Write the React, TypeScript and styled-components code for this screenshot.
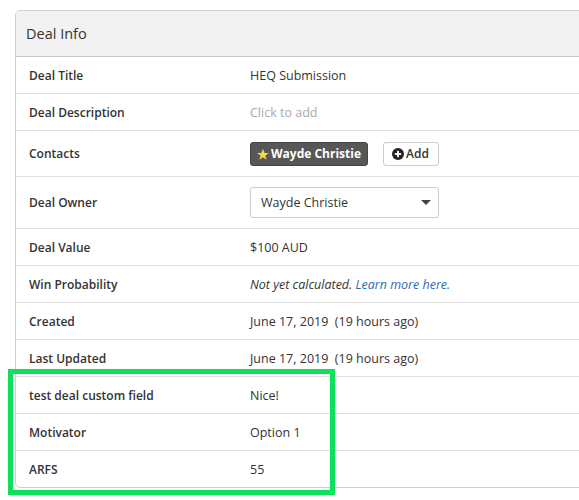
import React from 'react';
import styled, { createGlobalStyle } from 'styled-components';

const GlobalStyle = createGlobalStyle`
  html, body {
    margin: 0;
    padding: 0;
    background: #fff;
    font-family: 'Open Sans', 'Liberation Sans', sans-serif;
    color: #333;
  }
`;

const Page = styled.div`
  position: relative;
  width: 579px;
  height: 500px;
  overflow: hidden;
  padding: 10px 0 0 15px;
  box-sizing: border-box;
`;

const Panel = styled.div`
  width: 600px;
  border: 1px solid #cfcfcf;
  border-radius: 5px;
  overflow: hidden;
  background: #fff;
`;

const Header = styled.div`
  height: 45px;
  background: #f2f2f2;
  border-bottom: 1px solid #c8c8c8;
  display: flex;
  align-items: center;
  padding-left: 10px;
  font-size: 14.5px;
  color: #333;
`;

const Row = styled.div<{ $h?: number; $last?: boolean }>`
  display: grid;
  grid-template-columns: 221px 1fr;
  align-items: center;
  height: ${(p) => p.$h ?? 36}px;
  border-bottom: ${(p) => (p.$last ? 'none' : '1px solid #dedede')};
  padding-left: 13px;
`;

const Label = styled.div`
  font-size: 12px;
  font-weight: 600;
  color: #333;
`;

const Value = styled.div<{ $muted?: boolean; $italic?: boolean }>`
  font-size: 12.5px;
  color: ${(p) => (p.$muted ? '#aaa' : '#333')};
  font-style: ${(p) => (p.$italic ? 'italic' : 'normal')};
  display: flex;
  align-items: center;
  white-space: pre;
`;

const LinkText = styled.span`
  color: #2b6cb0;
`;

const ContactTag = styled.span`
  display: inline-flex;
  align-items: center;
  gap: 2px;
  height: 24px;
  padding: 0 6px;
  box-sizing: border-box;
  background: #575757;
  border: 1px solid #444;
  border-radius: 3px;
  color: #fff;
  font-weight: 700;
  font-size: 12px;
`;

const Star = styled.span`
  color: #f4dc4a;
  font-size: 13px;
`;

const AddButton = styled.button`
  display: inline-flex;
  align-items: center;
  gap: 2px;
  height: 24px;
  margin-left: 15px;
  padding: 0 9px 0 8px;
  background: #fff;
  border: 1px solid #ccc;
  border-radius: 3px;
  font-family: inherit;
  font-size: 12px;
  font-weight: 600;
  color: #333;
`;

const Select = styled.div`
  width: 189px;
  height: 31px;
  box-sizing: border-box;
  border: 1px solid #ccc;
  border-radius: 3px;
  display: flex;
  align-items: center;
  justify-content: space-between;
  padding: 0 7px 0 10px;
  font-size: 12.5px;
  color: #333;
`;

const Caret = styled.span`
  width: 0;
  height: 0;
  border-left: 5px solid transparent;
  border-right: 5px solid transparent;
  border-top: 5px solid #444;
`;

const Highlight = styled.div`
  position: absolute;
  left: 8px;
  top: 369px;
  width: 327px;
  height: 126px;
  box-sizing: border-box;
  border: 5px solid #0fe05c;
  pointer-events: none;
`;

const PlusIcon = () => (
  <svg width="12" height="12" viewBox="0 0 12 12">
    <circle cx="6" cy="6" r="6" fill="#222" />
    <rect x="2.8" y="5.1" width="6.4" height="1.8" fill="#fff" />
    <rect x="5.1" y="2.8" width="1.8" height="6.4" fill="#fff" />
  </svg>
);

const rows: { label: string; value: React.ReactNode; muted?: boolean; italic?: boolean }[] = [
  { label: 'Deal Value', value: '$100 AUD' },
  {
    label: 'Win Probability',
    value: (
      <>
        Not yet calculated. <LinkText>Learn more here.</LinkText>
      </>
    ),
    italic: true,
  },
  { label: 'Created', value: 'June 17, 2019  (19 hours ago)' },
  { label: 'Last Updated', value: 'June 17, 2019  (19 hours ago)' },
  { label: 'test deal custom field', value: 'Nice!' },
  { label: 'Motivator', value: 'Option 1' },
  { label: 'ARFS', value: '55' },
];

export default function App() {
  return (
    <>
      <GlobalStyle />
      <Page>
        <Panel>
          <Header>Deal Info</Header>
          <Row>
            <Label>Deal Title</Label>
            <Value>HEQ Submission</Value>
          </Row>
          <Row>
            <Label>Deal Description</Label>
            <Value $muted>Click to add</Value>
          </Row>
          <Row $h={45}>
            <Label>Contacts</Label>
            <Value>
              <ContactTag>
                <Star>★</Star>Wayde Christie
              </ContactTag>
              <AddButton>
                <PlusIcon />
                Add
              </AddButton>
            </Value>
          </Row>
          <Row $h={51}>
            <Label>Deal Owner</Label>
            <Value>
              <Select>
                Wayde Christie
                <Caret />
              </Select>
            </Value>
          </Row>
          {rows.map((r, i) => (
            <Row key={r.label} $last={i === rows.length - 1}>
              <Label>{r.label}</Label>
              <Value $muted={r.muted} $italic={r.italic}>
                {r.value}
              </Value>
            </Row>
          ))}
        </Panel>
        <Highlight />
      </Page>
    </>
  );
}
